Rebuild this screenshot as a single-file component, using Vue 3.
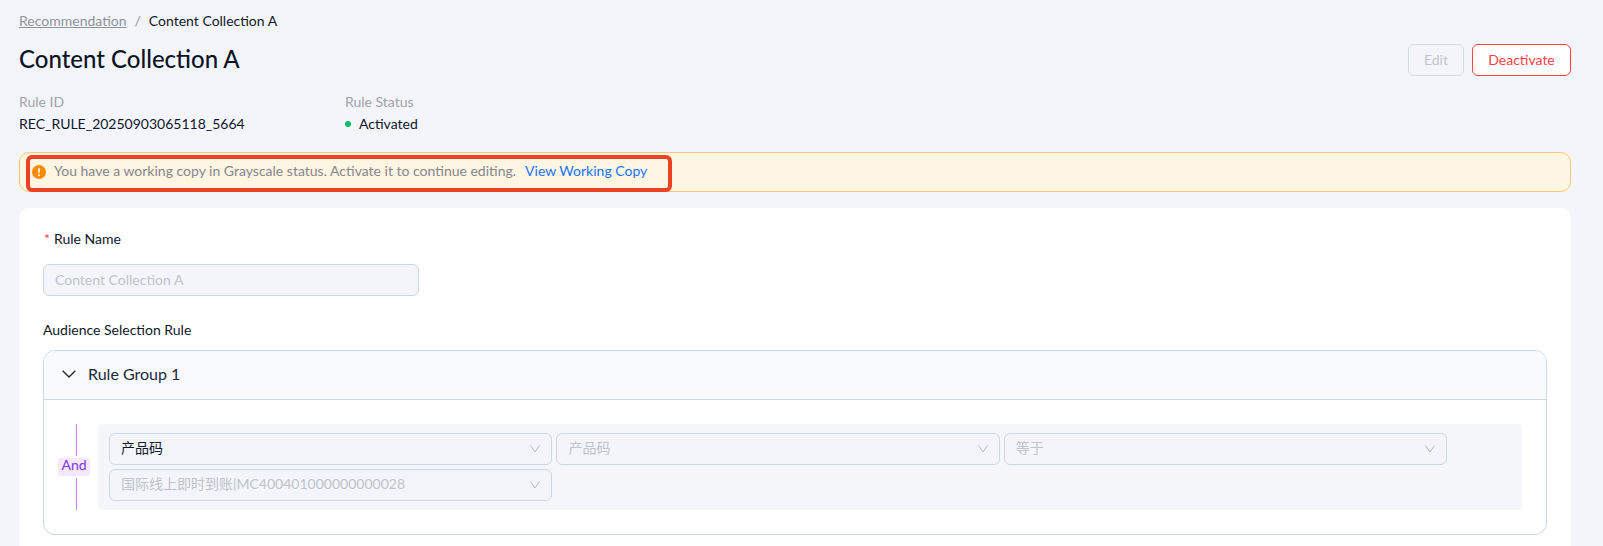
<script setup>
const selects = [
  { text: '产品码', dark: true },
  { text: '产品码' },
  { text: '等于' },
  { text: '国际线上即时到账|MC400401000000000028' },
]
</script>

<template>
  <div class="page">
    <nav class="crumbs">
      <a class="crumb-link">Recommendation</a>
      <span class="crumb-sep">/</span>
      <span class="crumb-current">Content Collection A</span>
    </nav>

    <header class="head">
      <h1 class="title">Content Collection A</h1>
      <div class="actions">
        <button class="btn btn-edit" disabled>Edit</button>
        <button class="btn btn-danger">Deactivate</button>
      </div>
    </header>

    <section class="meta">
      <div class="meta-col">
        <div class="meta-label">Rule ID</div>
        <div class="meta-value">REC_RULE_20250903065118_5664</div>
      </div>
      <div class="meta-col">
        <div class="meta-label">Rule Status</div>
        <div class="meta-value status"><i class="dot"></i>Activated</div>
      </div>
    </section>

    <div class="alert">
      <svg class="alert-icon" width="14" height="14" viewBox="0 0 14 14">
        <circle cx="7" cy="7" r="7" fill="#ff8a00" />
        <rect x="6.2" y="3" width="1.6" height="5.2" rx="0.8" fill="#fff" />
        <circle cx="7" cy="10.2" r="0.95" fill="#fff" />
      </svg>
      <span class="alert-text">You have a working copy in Grayscale status. Activate it to continue editing.</span>
      <a class="alert-link">View Working Copy</a>
      <div class="annotation"></div>
    </div>

    <main class="card">
      <label class="field-label"><span class="req">*</span>Rule Name</label>
      <div class="input">Content Collection A</div>

      <div class="section-label">Audience Selection Rule</div>

      <section class="group">
        <div class="group-head">
          <svg class="group-chevron" width="14" height="8" viewBox="0 0 14 8" fill="none">
            <path d="M0.7 0.7 L7 7 L13.3 0.7" stroke="#1f2937" stroke-width="1.4" />
          </svg>
          <span class="group-title">Rule Group 1</span>
        </div>
        <div class="group-body">
          <div class="logic">
            <span class="logic-tag">And</span>
          </div>
          <div class="conditions">
            <div v-for="(s, i) in selects" :key="i" class="select" :class="{ dark: s.dark }">
              <span class="select-text">{{ s.text }}</span>
              <svg width="10" height="8" viewBox="0 0 10 8" fill="none">
                <path d="M0.5 0.5 L5 7 L9.5 0.5" stroke="#b4b9c4" stroke-width="1" />
              </svg>
            </div>
          </div>
        </div>
      </section>
    </main>
  </div>
</template>

<style scoped>
.page {
  box-sizing: border-box;
  height: 546px;
  overflow: hidden;
  padding: 0 32px 0 19px;
  background: #f4f5fa;
  font-family: Lato, "Noto Sans CJK SC", sans-serif;
  font-size: 14px;
  color: #0f172a;
}
.crumbs {
  height: 40px;
  display: flex;
  align-items: center;
  font-size: 14px;
}
.crumb-link {
  color: #8f939c;
  text-decoration: underline;
}
.crumb-sep {
  margin: 0 8px;
  color: #8f939c;
}
.crumb-current {
  color: #111827;
}
.head {
  height: 36px;
  display: flex;
  align-items: flex-end;
  justify-content: space-between;
}
.title {
  margin: 0 0 1px;
  font-size: 24px;
  line-height: 32px;
  font-weight: 500;
  color: #0b1426;
}
.actions {
  display: flex;
  gap: 8px;
}
.btn {
  box-sizing: border-box;
  height: 32px;
  border-radius: 6px;
  font: inherit;
  padding: 0 0 2px;
}
.btn-edit {
  width: 56px;
  background: transparent;
  border: 1px solid #d3dbe8;
  color: #c2c5cc;
}
.btn-danger {
  width: 99px;
  background: #fff;
  border: 1px solid #ff4045;
  color: #ff4045;
}
.meta {
  display: flex;
  margin-top: 15px;
}
.meta-col {
  width: 326px;
}
.meta-label {
  height: 22px;
  line-height: 22px;
  color: #a0a3aa;
}
.meta-value {
  height: 22px;
  line-height: 22px;
  color: #0f172a;
}
.status {
  display: flex;
  align-items: center;
}
.dot {
  width: 6px;
  height: 6px;
  border-radius: 50%;
  background: #00c060;
  margin-right: 8px;
}
.alert {
  position: relative;
  box-sizing: border-box;
  height: 40px;
  margin-top: 17px;
  display: flex;
  align-items: center;
  padding-left: 12px;
  background: #fff5e3;
  border: 1px solid #ffc871;
  border-radius: 10px;
}
.alert-icon {
  flex: none;
  margin-right: 8px;
}
.alert-text {
  color: #85878d;
  margin-bottom: 4px;
}
.alert-link {
  margin-left: 9px;
  margin-bottom: 4px;
  color: #1677ff;
}
.annotation {
  position: absolute;
  left: 6px;
  top: 2px;
  width: 646px;
  height: 37px;
  box-sizing: border-box;
  border: 4px solid #ea4224;
  border-radius: 6px;
}
.card {
  margin-top: 16px;
  padding: 24px 24px 40px;
  height: 400px;
  background: #fff;
  border-radius: 10px;
}
.field-label {
  display: block;
  height: 22px;
  line-height: 14px;
  color: #0f172a;
}
.req {
  color: #ff4045;
  margin-right: 4px;
  margin-left: 1px;
}
.input {
  box-sizing: border-box;
  width: 376px;
  height: 32px;
  margin-top: 10px;
  padding: 0 11px;
  line-height: 30px;
  background: #f3f5fa;
  border: 1px solid #ccd6e6;
  border-radius: 6px;
  color: #bfc3cc;
}
.section-label {
  height: 22px;
  margin-top: 24px;
  line-height: 20px;
  color: #0f172a;
}
.group {
  box-sizing: border-box;
  height: 185px;
  margin-top: 8px;
  border: 1px solid #cbd6e6;
  border-radius: 12px;
  overflow: hidden;
}
.group-head {
  box-sizing: border-box;
  height: 49px;
  display: flex;
  align-items: center;
  padding-left: 18px;
  background: #f9fafc;
  border-bottom: 1px solid #cbd6e6;
}
.group-chevron {
  margin-bottom: 2px;
}
.group-title {
  margin-left: 12px;
  margin-bottom: 4px;
  font-size: 16px;
  color: #1e293b;
}
.group-body {
  display: flex;
  padding: 24px 24px 0 14px;
}
.logic {
  position: relative;
  flex: none;
  width: 32px;
  height: 86px;
  margin-right: 8px;
  display: flex;
  align-items: center;
  justify-content: center;
}
.logic::before {
  content: "";
  position: absolute;
  left: 18px;
  top: 0;
  bottom: 0;
  width: 1px;
  background: #c08cf0;
}
.logic-tag {
  position: relative;
  width: 32px;
  height: 18px;
  line-height: 14px;
  text-align: center;
  background: #f4e8fd;
  border-radius: 2px;
  color: #8236e0;
  outline: 2px solid #fff;
  outline-offset: 0;
}
.conditions {
  box-sizing: border-box;
  flex: 1;
  height: 86px;
  padding: 9px 11px;
  display: grid;
  grid-template-columns: repeat(3, 443.4px);
  grid-auto-rows: 32px;
  gap: 4px;
  background: #f5f6fa;
  border-radius: 4px;
}
.select {
  box-sizing: border-box;
  display: flex;
  align-items: center;
  justify-content: space-between;
  padding: 0 11px;
  background: #f3f5fa;
  border: 1px solid #ccd6e6;
  border-radius: 6px;
  color: #c0c3ca;
}
.select-text {
  margin-bottom: 4px;
}
.select.dark .select-text {
  color: #0f172a;
}
</style>

<style>
html, body {
  margin: 0;
  overflow: hidden;
}
</style>
